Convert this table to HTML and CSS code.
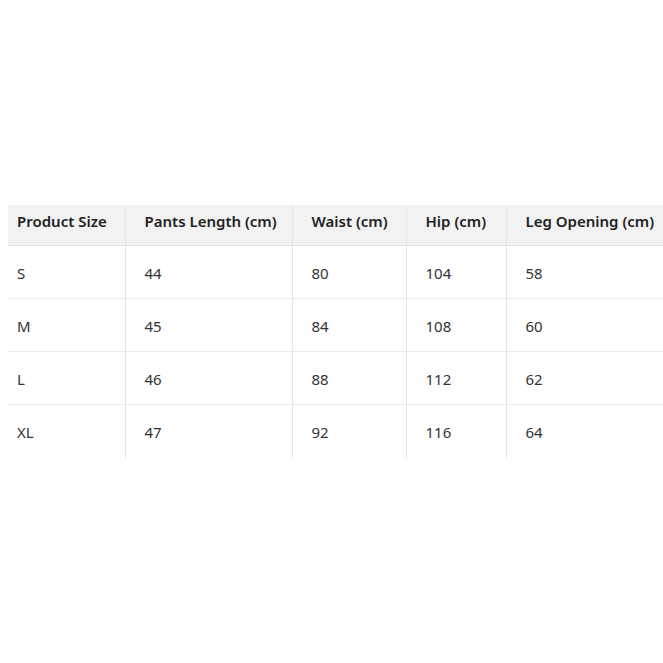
FILE: index.html
```html
<!DOCTYPE html>
<html>
<head>
<meta charset="utf-8">
<link rel="stylesheet" href="styles.css">
</head>
<body>
<div class="page">
<table class="size-table">
  <colgroup>
    <col class="c1"><col class="c2"><col class="c3"><col class="c4"><col class="c5">
  </colgroup>
  <thead>
    <tr><th>Product Size</th><th>Pants Length (cm)</th><th>Waist (cm)</th><th>Hip (cm)</th><th>Leg Opening (cm)</th></tr>
  </thead>
  <tbody>
    <tr><td>S</td><td>44</td><td>80</td><td>104</td><td>58</td></tr>
    <tr><td>M</td><td>45</td><td>84</td><td>108</td><td>60</td></tr>
    <tr><td>L</td><td>46</td><td>88</td><td>112</td><td>62</td></tr>
    <tr><td>XL</td><td>47</td><td>92</td><td>116</td><td>64</td></tr>
  </tbody>
</table>
</div>
</body>
</html>
```
FILE: styles.css
```css
html, body { margin: 0; padding: 0; background: #fff; }
body { font-family: "Noto Sans", "Open Sans", sans-serif; color: #333; overflow: hidden; }
.page { padding: 205px 0 0 8px; width: 663px; box-sizing: border-box; }
.size-table { border-collapse: collapse; table-layout: fixed; width: 655px; font-size: 15px; }
.c1 { width: 117px; } .c2 { width: 167px; } .c3 { width: 114px; } .c4 { width: 100px; } .c5 { width: 157px; }
.size-table th, .size-table td { text-align: left; padding: 0 0 0 19px; border-left: 1px solid #e6e6e6; white-space: nowrap; }
.size-table th:first-child, .size-table td:first-child { padding-left: 9px; border-left: none; }
.size-table th { background: #f2f2f2; font-weight: 600; height: 31px; padding-bottom: 9px; color: #222; border-bottom: 1px solid #e3e3e3; }
.size-table td { height: 53px; padding-top: 2px; box-sizing: border-box; border-top: 1px solid #ececec; }
.size-table tbody tr:first-child td { border-top: none; }
```
